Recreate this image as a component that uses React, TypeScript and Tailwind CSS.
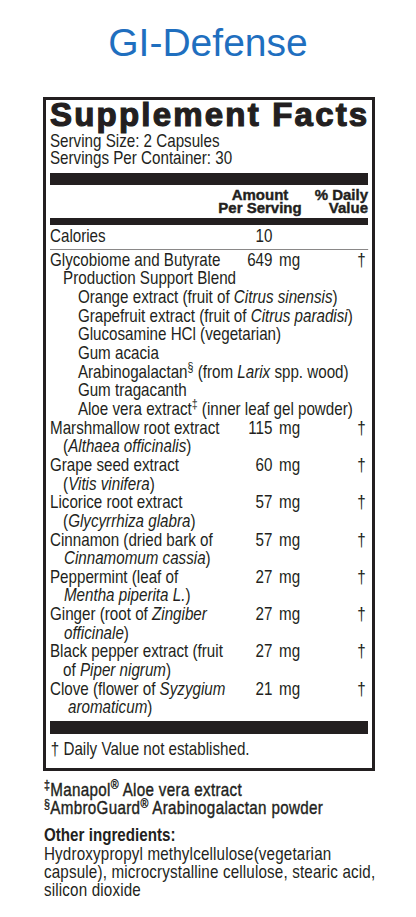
// The label face is a condensed grotesque; no narrow face is installed, so
// the regular Liberation Sans text blocks are squeezed horizontally.
const sans = "font-['Liberation_Sans',Arial,sans-serif]"
const squeeze = 'origin-left scale-x-[0.82]'

type Row = {
  lines: { text: React.ReactNode; indent: string }[]
  amount: string
}

const rows: Row[] = [
  {
    lines: [
      { text: 'Glycobiome and Butyrate', indent: 'pl-0' },
      { text: 'Production Support Blend', indent: 'pl-[16px]' },
      { text: <>Orange extract (fruit of <i>Citrus sinensis</i>)</>, indent: 'pl-[34px]' },
      { text: <>Grapefruit extract (fruit of <i>Citrus paradisi</i>)</>, indent: 'pl-[34px]' },
      { text: 'Glucosamine HCl (vegetarian)', indent: 'pl-[34px]' },
      { text: 'Gum acacia', indent: 'pl-[34px]' },
      { text: <>Arabinogalactan<sup className="text-[13px]">§</sup> (from <i>Larix</i> spp. wood)</>, indent: 'pl-[34px]' },
      { text: 'Gum tragacanth', indent: 'pl-[34px]' },
      { text: <>Aloe vera extract<sup className="text-[13px]">‡</sup> (inner leaf gel powder)</>, indent: 'pl-[34px]' },
    ],
    amount: '649',
  },
  {
    lines: [
      { text: 'Marshmallow root extract', indent: 'pl-0' },
      { text: <>(<i>Althaea officinalis</i>)</>, indent: 'pl-[16px]' },
    ],
    amount: '115',
  },
  {
    lines: [
      { text: 'Grape seed extract', indent: 'pl-0' },
      { text: <>(<i>Vitis vinifera</i>)</>, indent: 'pl-[16px]' },
    ],
    amount: '60',
  },
  {
    lines: [
      { text: 'Licorice root extract', indent: 'pl-0' },
      { text: <>(<i>Glycyrrhiza glabra</i>)</>, indent: 'pl-[16px]' },
    ],
    amount: '57',
  },
  {
    lines: [
      { text: 'Cinnamon (dried bark of', indent: 'pl-0' },
      { text: <><i>Cinnamomum cassia</i>)</>, indent: 'pl-[17px]' },
    ],
    amount: '57',
  },
  {
    lines: [
      { text: 'Peppermint (leaf of', indent: 'pl-0' },
      { text: <><i>Mentha piperita L.</i>)</>, indent: 'pl-[17px]' },
    ],
    amount: '27',
  },
  {
    lines: [
      { text: <>Ginger (root of <i>Zingiber</i></>, indent: 'pl-0' },
      { text: <><i>officinale</i>)</>, indent: 'pl-[17px]' },
    ],
    amount: '27',
  },
  {
    lines: [
      { text: 'Black pepper extract (fruit', indent: 'pl-0' },
      { text: <>of <i>Piper nigrum</i>)</>, indent: 'pl-[16px]' },
    ],
    amount: '27',
  },
  {
    lines: [
      { text: <>Clove (flower of <i>Syzygium</i></>, indent: 'pl-0' },
      { text: <><i>aromaticum</i>)</>, indent: 'pl-[22px]' },
    ],
    amount: '21',
  },
]

function Amount({ value, unit = true }: { value: string; unit?: boolean }) {
  return (
    <div className="w-[80px] shrink-0 flex justify-end">
      <span>{value}</span>
      <span className={unit ? 'ml-[8px]' : 'ml-[8px] invisible'}>mg</span>
    </div>
  )
}

export default function App() {
  return (
    <main className="min-h-[917px] w-[416px] overflow-hidden bg-white text-[#231f20]">
      <h1 className={`${sans} pt-[21px] text-center text-[39px] leading-[44px] text-[#1f6fbf]`}>
        GI-Defense
      </h1>

      <section className="mt-[32px] ml-[43px] w-[332px] border-[3px] border-[#231f20] px-[4px] pb-[9px]">
        <h2 className={`${sans} font-bold text-[33px] leading-[30px] tracking-[2.2px] [-webkit-text-stroke:1.2px_#231f20] whitespace-nowrap`}>
          Supplement Facts
        </h2>
        <div className={`${sans} ${squeeze} w-[388px] mt-[3px] text-[18.5px] leading-[16.5px] whitespace-nowrap`}>
          <p>Serving Size: 2 Capsules</p>
          <p>Servings Per Container: 30</p>
        </div>

        <div className="mt-[7px] h-[12px] bg-[#231f20]" />

        <div className={`${sans} mt-[3px] flex font-bold text-[15px] leading-[13px] [-webkit-text-stroke:0.4px_#231f20]`}>
          <div className="flex-1" />
          <div className="w-[100px] text-center">
            Amount<br />Per Serving
          </div>
          <div className="w-[58px] text-right">
            % Daily<br />Value
          </div>
        </div>

        <div className="mt-[4px] h-[7px] bg-[#231f20]" />

        <div className={`${sans} ${squeeze} w-[388px] text-[18.5px] leading-[18.65px]`}>
          <div className="flex pt-[2px] pb-[3px] border-b border-[#8a8888]">
            <div className="w-[225px] shrink-0">Calories</div>
            <Amount value="10" unit={false} />
          </div>

          <div className="pt-[1px]">
            {rows.map((row, i) => (
              <div key={i} className="flex">
                <div className="w-[225px] shrink-0 whitespace-nowrap">
                  {row.lines.map((l, j) => (
                    <p key={j} className={l.indent}>{l.text}</p>
                  ))}
                </div>
                <Amount value={row.amount} />
                <div className="flex-1 text-right pr-[3px]">†</div>
              </div>
            ))}
          </div>
        </div>

        <div className="mt-[4px] h-[13px] bg-[#231f20]" />

        <p className={`${sans} ${squeeze} w-[388px] mt-[6px] pl-[1px] text-[18.5px] leading-[18.65px]`}>
          † Daily Value not established.
        </p>
      </section>

      <div className={`${sans} ${squeeze} ml-[44px] mt-[10px] w-[440px] whitespace-nowrap text-[18.5px] leading-[18.3px]`}>
        <p className="tracking-[0.4px] [-webkit-text-stroke:0.4px_#231f20]">
          <sup className="text-[13px]">‡</sup>Manapol<sup className="text-[13px]">®</sup> Aloe vera extract
        </p>
        <p className="tracking-[0.4px] [-webkit-text-stroke:0.4px_#231f20]">
          <sup className="text-[13px]">§</sup>AmbroGuard<sup className="text-[13px]">®</sup> Arabinogalactan powder
        </p>
        <p className="mt-[9px] font-bold">Other ingredients:</p>
        <div className="tracking-[0.2px]">
          <p>Hydroxypropyl methylcellulose(vegetarian</p>
          <p>capsule), microcrystalline cellulose, stearic acid,</p>
          <p>silicon dioxide</p>
        </div>
      </div>
    </main>
  )
}
